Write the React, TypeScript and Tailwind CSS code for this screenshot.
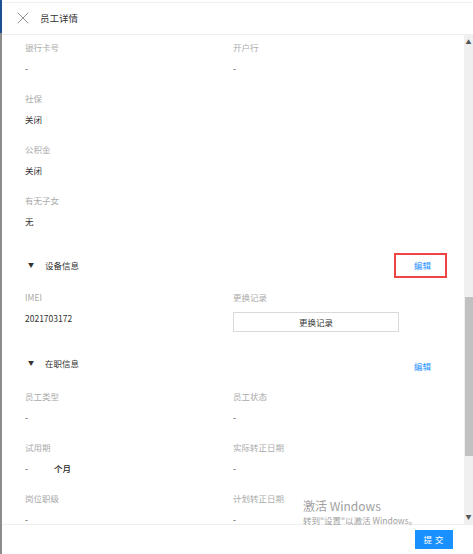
import React from "react";
import { X } from "lucide-react";

type Field = { label: string; value: React.ReactNode };

const personal: Field[] = [
  { label: "社保", value: "关闭" },
  { label: "公积金", value: "关闭" },
  { label: "有无子女", value: "无" },
];

function FieldCell({ label, value }: Field) {
  return (
    <div className="pb-[14px]">
      <div className="text-[8.5px] leading-4 text-[#aaa]">{label}</div>
      <div className="mt-[5px] text-[8.5px] leading-4 text-[#333]">{value}</div>
    </div>
  );
}

function SectionTitle({
  title,
  boxed,
  className,
}: {
  title: string;
  boxed?: boolean;
  className?: string;
}) {
  return (
    <div className={`flex h-4 items-center justify-between ${className ?? ""}`}>
      <div className="flex items-center text-[8.5px] text-[#333]">
        <span className="ml-[3px] mr-[11px] text-[6px] leading-none">▼</span>
        {title}
      </div>
      {boxed ? (
        <div className="-mr-4 flex h-[25px] w-[53px] items-center border-2 border-[#ef4444] pl-[18px] text-[8.5px] text-[#1890ff]">
          编辑
        </div>
      ) : (
        <span className="mt-[6px] text-[8.5px] text-[#1890ff]">编辑</span>
      )}
    </div>
  );
}

export default function App() {
  return (
    <div
      className="flex h-[554px] w-[473px] overflow-hidden bg-white"
      style={{ fontFamily: '"Noto Sans CJK SC", "Noto Sans", sans-serif' }}
    >
      {/* edge of the page behind the drawer */}
      <div className="flex w-[2px] flex-col">
        <div className="h-[33px] bg-[#1d4f91]" />
        <div className="flex-1 bg-[#8c8c8c]" />
      </div>

      <div className="relative flex flex-1 flex-col">
        {/* header */}
        <div className="flex h-[35px] items-center border-b border-[#eeeeee] pt-[2px]">
          <div className="absolute left-0 right-0 top-[2px] h-px bg-[#f0f0f0]" />
          <X size={20} strokeWidth={1.1} className="ml-[11px] text-[#888]" />
          <span className="ml-[7px] text-[9.5px] text-[#333]">员工详情</span>
        </div>

        {/* body */}
        <div className="flex flex-1 overflow-hidden">
          <div className="flex-1 overflow-hidden pl-[23px] pr-[33px] pt-1">
            <div className="grid grid-cols-[208px_1fr]">
              <FieldCell label="银行卡号" value="-" />
              <FieldCell label="开户行" value="-" />
            </div>
            {personal.map((f) => (
              <FieldCell key={f.label} {...f} />
            ))}

            <SectionTitle title="设备信息" boxed className="mt-[14px]" />
            <div className="mt-4 grid grid-cols-[208px_1fr]">
              <FieldCell label="IMEI" value="2021703172" />
              <div className="pb-[14px]">
                <div className="text-[8.5px] leading-4 text-[#aaa]">更换记录</div>
                <button className="mt-[7px] h-5 w-[166px] border border-[#d9d9d9] text-[8.5px] text-[#333]">
                  更换记录
                </button>
              </div>
            </div>

            <SectionTitle title="在职信息" className="mt-[9px]" />
            <div className="mt-[17px] grid grid-cols-[208px_1fr]">
              <FieldCell label="员工类型" value="-" />
              <FieldCell label="员工状态" value="-" />
              <FieldCell
                label="试用期"
                value={
                  <span className="flex items-center">
                    -<span className="ml-[26px] text-[8.5px] font-medium text-[#222]">个月</span>
                  </span>
                }
              />
              <FieldCell label="实际转正日期" value="-" />
              <FieldCell label="岗位职级" value="-" />
              <FieldCell label="计划转正日期" value="-" />
            </div>
          </div>

          {/* scrollbar */}
          <div className="flex w-[9px] flex-col items-center bg-[#f0f0f0]">
            <span className="mt-1 text-[6px] leading-none text-[#555]">▲</span>
            <div className="mt-[252px] h-[159px] w-[8px] self-end bg-[#c1c1c1]" />
            <span className="mt-auto mb-1 text-[6px] leading-none text-[#555]">▼</span>
          </div>
        </div>

        {/* footer */}
        <div className="flex h-[30px] items-center justify-end border-t border-[#eeeeee] pr-[20px]">
          <button className="h-[19px] w-[38px] bg-[#1890ff] pl-[2px] text-[8.5px] tracking-[3px] text-white">
            提交
          </button>
        </div>

        {/* activation watermark */}
        <div className="pointer-events-none absolute left-[301px] top-[498px] text-[#a0a0a0]">
          <div className="text-[12px] leading-4">激活 Windows</div>
          <div className="text-[8.5px] leading-3">转到"设置"以激活 Windows。</div>
        </div>
      </div>
    </div>
  );
}
